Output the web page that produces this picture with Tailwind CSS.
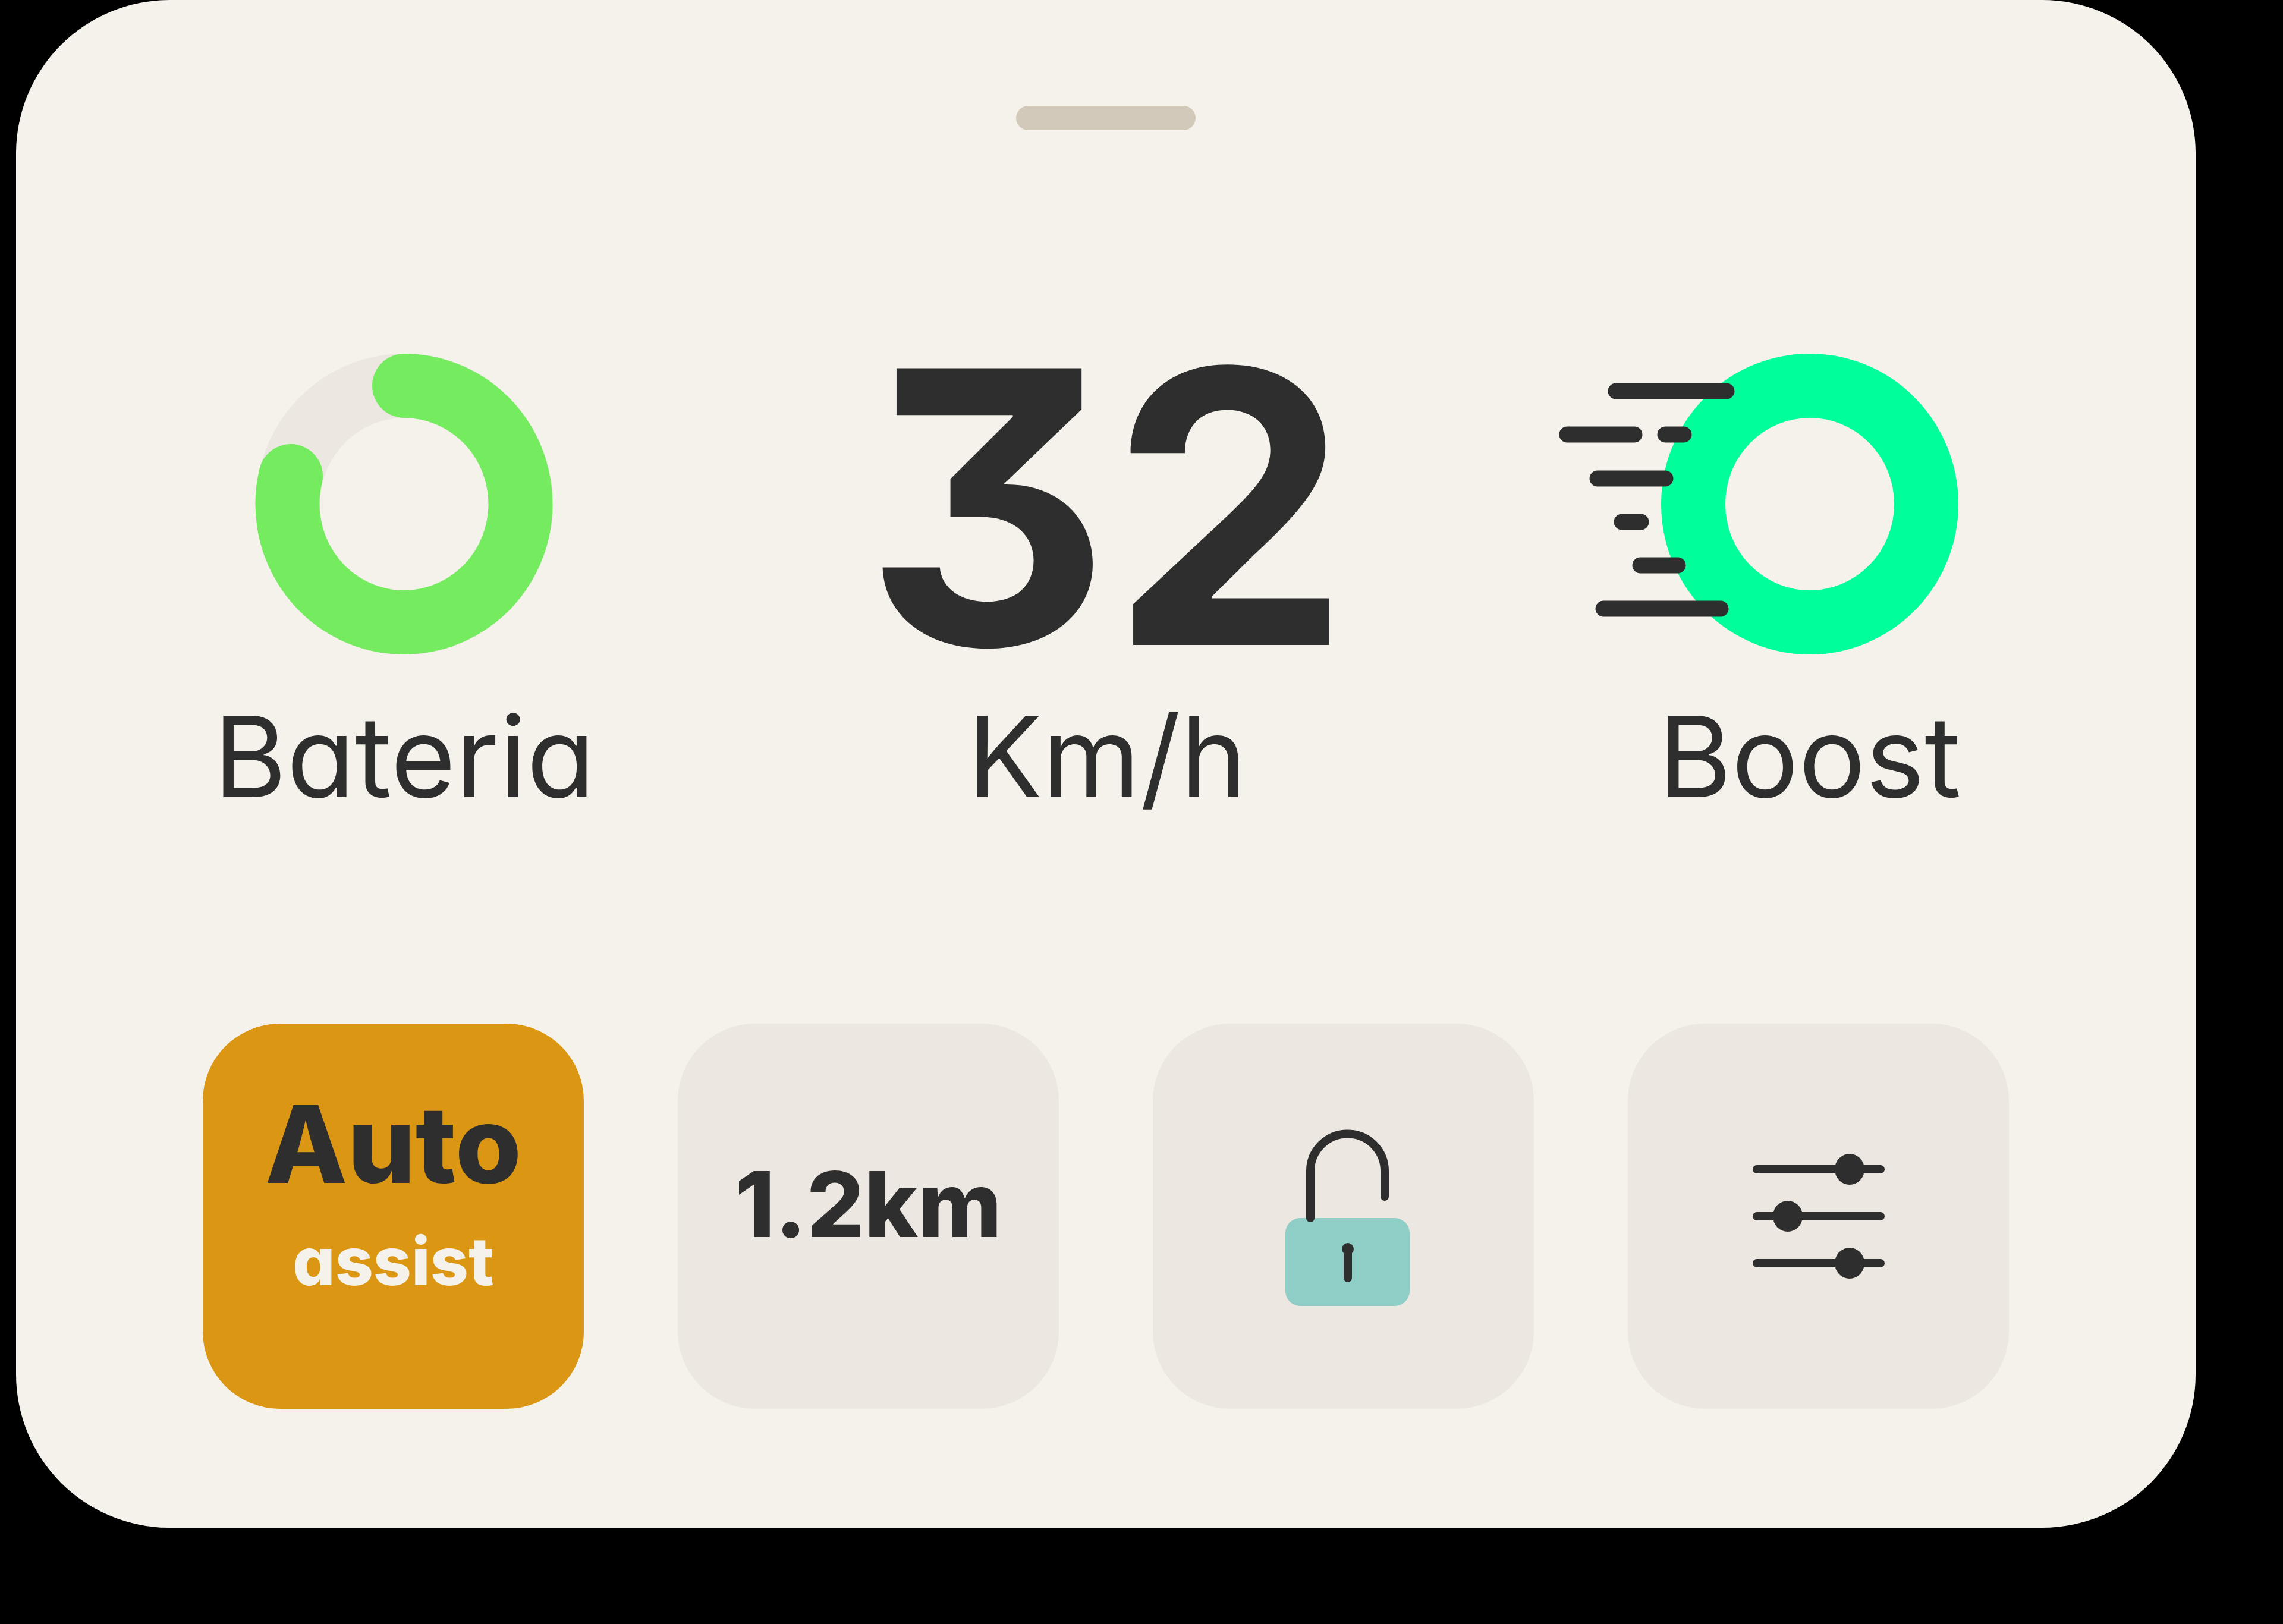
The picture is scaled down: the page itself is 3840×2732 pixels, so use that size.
<!DOCTYPE html>
<html lang="pt">
<head>
<meta charset="utf-8">
<meta name="viewport" content="width=device-width, initial-scale=1">
<title>Painel</title>
<script src="https://cdn.jsdelivr.net/npm/@tailwindcss/browser@4"></script>
</head>
<body class="min-h-screen bg-black font-['Inter',sans-serif] text-[#2e2e2e] [font-feature-settings:'cv11','cv09']">
<main class="ml-[27px] mr-[147px] flex flex-col rounded-[258px] bg-[#f5f2eb] pb-[200px] pt-[178px]">
  <!-- Sheet handle -->
  <div class="h-[41px] w-[302px] self-center rounded-full bg-[#d2c9bb]"></div>

  <!-- Readings -->
  <section class="mt-[376px] grid grid-cols-3 pl-[62px] pr-[58px]">
    <div class="flex flex-col items-center gap-[79px]">
      <svg class="h-[505px] w-[500px] overflow-visible" viewBox="0 0 500 505" fill="none" stroke-width="108" stroke-linecap="round" role="img" aria-label="Bateria">
        <ellipse cx="250" cy="253" rx="196" ry="199" stroke="#ece7e1"/>
        <path d="M250 54A196 199 0 1 1 59 206" stroke="#75eb60"/>
      </svg>
      <p class="text-[188px] leading-[188px]">Bateria</p>
    </div>
    <div class="flex flex-col items-center gap-[79px]">
      <p class="h-[505px] text-[640px] font-bold leading-[515px]">32</p>
      <p class="text-[188px] leading-[188px]">Km/h</p>
    </div>
    <div class="flex flex-col items-center gap-[79px]">
      <svg class="h-[505px] w-[500px] overflow-visible" viewBox="0 0 500 505" fill="none" role="img" aria-label="Boost">
        <ellipse cx="250" cy="253" rx="196" ry="199" stroke="#00ff9b" stroke-width="108"/>
        <path d="M-76 63H110M-158 136H-45M7 136H38M-107 210H7M-66 283H-34M-35 356H28M-97 429H100" stroke="#2e2e2e" stroke-width="27" stroke-linecap="round"/>
      </svg>
      <p class="text-[188px] leading-[188px]">Boost</p>
    </div>
  </section>

  <!-- Actions -->
  <section class="mt-[355px] grid grid-cols-4 gap-[158px] px-[314px]">
    <button type="button" class="flex h-[648px] flex-col items-center justify-center gap-[50px] rounded-[130px] bg-[#db9614] pb-20 font-extrabold">
      <span class="text-[180px] leading-[180px]">Auto</span>
      <span class="text-[112px] leading-[112px] text-[#f5f2eb]">assist</span>
    </button>
    <button type="button" class="flex h-[648px] items-center justify-center rounded-[130px] bg-[#ece7e1] pb-10 text-[152px] font-extrabold leading-[152px]">1.2km</button>
    <button type="button" aria-label="Desbloquear" class="flex h-[648px] items-center justify-center rounded-[130px] bg-[#ece7e1]">
      <svg class="h-[302px] w-[224px]" viewBox="0 0 224 302" fill="none" stroke="#2e2e2e" stroke-width="14" stroke-linecap="round">
        <rect x="14" y="154" width="209" height="148" rx="25" fill="#8fcec6" stroke="none"/>
        <path d="M56 154V75A62.5 62.5 0 0 1 181 75V118M119 208V255"/>
        <circle cx="119" cy="206" r="10" fill="#2e2e2e" stroke="none"/>
      </svg>
    </button>
    <button type="button" aria-label="Ajustes" class="flex h-[648px] items-center justify-center rounded-[130px] bg-[#ece7e1]">
      <svg class="h-[212px] w-[222px]" viewBox="0 0 222 212" fill="#2e2e2e">
        <path d="M7 27H215M7 106H215M7 185H215" stroke="#2e2e2e" stroke-width="14" stroke-linecap="round"/>
        <ellipse cx="163" cy="27" rx="25" ry="26"/>
        <ellipse cx="59" cy="106" rx="25" ry="26"/>
        <ellipse cx="163" cy="185" rx="25" ry="26"/>
      </svg>
    </button>
  </section>
</main>
</body>
</html>
